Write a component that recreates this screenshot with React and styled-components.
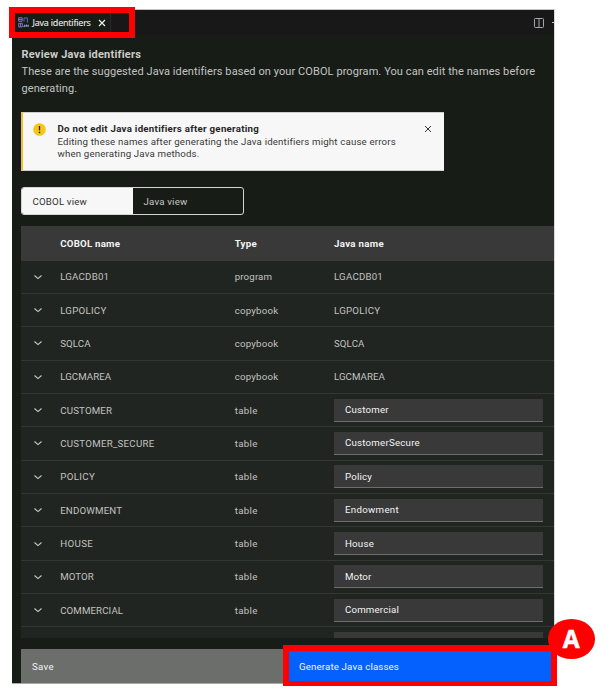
import React from 'react';
import styled, { createGlobalStyle } from 'styled-components';

const Global = createGlobalStyle`
  * { box-sizing: border-box; }
  body { margin: 0; background: #fff; font-family: Roboto, "Liberation Sans", sans-serif; }
  button, input { font: inherit; color: inherit; border: 0; padding: 0; margin: 0; background: none; text-align: left; }
`;

const Stage = styled.div`
  position: relative;
  width: 614px;
  height: 694px;
  padding: 9px 0 0 12px;
  overflow: hidden;
`;

const Panel = styled.main`
  display: flex;
  flex-direction: column;
  width: 543px;
  height: 675px;
  background: #181c17;
  border-top: 1px solid #c4c4c4;
  border-right: 1px solid #d8d8d8;
  border-bottom: 1px solid #a9a9a9;
  overflow: hidden;
`;

const TabBar = styled.header`
  display: flex;
  justify-content: space-between;
  flex: none;
  height: 25px;
  background: #181818;
`;

const Tab = styled.div`
  display: flex;
  align-items: center;
  width: 99px;
  padding-left: 5.5px;
  background: #181c17;
  border-right: 1px solid #2a2a2a;
  color: #f0f0f0;
  font: 9px/12px "Open Sans", sans-serif;
  letter-spacing: -0.2px;
  white-space: nowrap;
`;

const TabLabel = styled.span`
  margin: 0 6px 0 4px;
  width: 59px;
  -webkit-text-stroke: 0.1px currentColor;
`;

const TabActions = styled.div`
  display: flex;
  align-items: center;
  gap: 8px;
`;

const Dash = styled.span`
  width: 2px;
  height: 1px;
  background: #c5c5c5;
`;

const Content = styled.section`
  display: flex;
  flex-direction: column;
  flex: none;
  height: 603px;
  padding: 11px 0 0 9px;
`;

const Title = styled.h1`
  margin: 0;
  padding-left: 0.5px;
  font-size: 11px;
  line-height: 17px;
  font-weight: 700;
  letter-spacing: 0.222px;
  color: #cbccca;
`;

const Intro = styled.p`
  margin: 0;
  padding-left: 0.5px;
  font-size: 11px;
  line-height: 17px;
  letter-spacing: 0.082px;
  color: #c3c4c2;
  white-space: nowrap;
`;

const Notice = styled.aside`
  display: flex;
  flex: none;
  width: 423px;
  height: 59px;
  margin-top: 15px;
  padding: 10px 12px 0 10px;
  background: #f7f7f7;
  border-left: 2px solid #f1c21b;
  border-top: 1px solid #cfcfcf;
  border-bottom: 1px solid #cfcfcf;
  color: #393939;
  font-size: 9.7px;
  line-height: 12.7px;
  letter-spacing: 0.167px;
  white-space: nowrap;
`;

const NoticeText = styled.div`
  flex: 1;
  margin-left: 11.5px;
`;

const NoticeTitle = styled.div`
  font-weight: 700;
  letter-spacing: 0.274px;
  color: #262626;
`;

const NoticeClose = styled.div`
  display: flex;
  align-items: center;
  height: 12px;
  color: #333;
`;

const Switcher = styled.div`
  display: flex;
  flex: none;
  width: 223px;
  height: 28px;
  margin-top: 16px;
  border: 1px solid #d5d5d5;
  border-radius: 3px;
  overflow: hidden;
`;

const SwitchButton = styled.button`
  width: ${(p) => (p.$selected ? '111px' : '110px')};
  padding-left: 10.5px;
  background: ${(p) => (p.$selected ? '#f7f7f7' : 'transparent')};
  color: ${(p) => (p.$selected ? '#303030' : '#c6c7c5')};
  font-size: 9.7px;
  letter-spacing: 0.18px;
`;

const Table = styled.div`
  flex: none;
  height: 412px;
  margin-top: 11px;
  overflow: hidden;
  background: #212521;
`;

const Row = styled.div`
  display: grid;
  grid-template-columns: 39.2px 174.5px 99.3px 209.5px;
  align-items: center;
  height: 33.36px;
  border-bottom: 1px solid #333632;
  color: #c1c3c0;
  font-size: 9.7px;
`;

const HeadRow = styled(Row)`
  height: 34.5px;
  padding-top: 1px;
  background: #393939;
  border-color: #393939;
  color: #f4f4f4;
  font-weight: 700;
`;

const Cell = styled.span`
  letter-spacing: ${(p) => p.$track}px;
  white-space: nowrap;
`;

const Expander = styled.button`
  display: flex;
  padding-left: 12px;
`;

const NameInput = styled.input`
  width: 209.5px;
  height: 23px;
  padding: 0 11px;
  background: #393939;
  border-bottom: 1px solid #6c6d6c;
  color: #f4f4f4;
  letter-spacing: ${(p) => p.$track}px;
  outline: 0;
`;

const Footer = styled.footer`
  display: flex;
  flex: none;
  height: 34px;
  margin: 11px 0 0 9px;
`;

const FooterButton = styled.button`
  width: ${(p) => (p.$primary ? '266px' : '267px')};
  padding-left: 11px;
  background: ${(p) => (p.$primary ? '#0561fe' : '#6b6e6a')};
  color: #f4f4f4;
  font-size: 9.7px;
  letter-spacing: ${(p) => (p.$primary ? '0.145px' : '0.32px')};
`;

const Highlight = styled.div`
  position: absolute;
  border: 6px solid #fe0000;
`;

const TabHighlight = styled(Highlight)`
  left: 9px;
  top: 7px;
  width: 126px;
  height: 31px;
`;

const ButtonHighlight = styled(Highlight)`
  left: 283px;
  top: 645px;
  width: 274px;
  height: 41px;
  border-bottom-width: 5px;
`;

const Callout = styled.div`
  position: absolute;
  left: 548px;
  top: 619px;
  width: 46.5px;
  height: 39.5px;
  border-radius: 50%;
  background: #fe0000;
  color: #fff;
  font: 700 24.5px/40px "Open Sans", sans-serif;
  -webkit-text-stroke: 0.5px #fff;
  text-align: center;
`;

const CloseIcon = ({ size, weight }) => (
  <svg width={size} height={size} viewBox="0 0 8 8" stroke="currentColor" strokeWidth={weight} fill="none">
    <path d="M1 1l6 6M7 1L1 7" />
  </svg>
);

const AppIcon = () => (
  <svg width="11" height="11" viewBox="0 0 11 11" fill="none" strokeWidth="1">
    <path d="M.7.7h3.4v3.6H.7zM.7 2.5h3.4" stroke="#8a6bd0" />
    <path d="M6 4.6V1h3.4v4.6" stroke="#4c6ec0" />
    <path d="M.7 6.3h3.6v3.6H.7zM2.5 6.3v3.6" stroke="#7d6bd6" />
    <path d="M5.4 9.6h1.2V7.7M8 9.8V8h1v1.8M10.3 7.7v2.1" stroke="#b8c0ea" strokeWidth=".8" />
  </svg>
);

const SplitIcon = () => (
  <svg width="10" height="10" viewBox="0 0 10 10" fill="none" stroke="#a5a5aa">
    <rect x=".5" y=".5" width="9" height="9" rx=".8" />
    <path d="M5 .5v9" />
  </svg>
);

const WarningIcon = () => (
  <svg width="13" height="13" viewBox="0 0 13 13">
    <circle cx="6.5" cy="6.5" r="6.3" fill="#f5c518" />
    <path d="M6.5 3v4.4" stroke="#262626" strokeWidth="1.3" />
    <circle cx="6.5" cy="9.4" r=".8" fill="#262626" />
  </svg>
);

const Chevron = () => (
  <svg width="10" height="10" viewBox="0 0 10 10" fill="none" stroke="#c9cac8" strokeWidth="1.1">
    <path d="M1.5 3.5L5 6.6l3.5-3.1" />
  </svg>
);

// Each text is paired with its letter spacing in pixels.
const TYPES = { program: 0.15, copybook: 0.217, table: 0.326 };

const ROWS = [
  { name: ['LGACDB01', 0.205], type: 'program' },
  { name: ['LGPOLICY', 0.255], type: 'copybook' },
  { name: ['SQLCA', 0.11], type: 'copybook' },
  { name: ['LGCMAREA', 0.066], type: 'copybook' },
  { name: ['CUSTOMER', 0.177], type: 'table', java: ['Customer', 0.192] },
  { name: ['CUSTOMER_SECURE', 0.268], type: 'table', java: ['CustomerSecure', 0.229] },
  { name: ['POLICY', 0.375], type: 'table', java: ['Policy', 0.177] },
  { name: ['ENDOWMENT', 0.161], type: 'table', java: ['Endowment', 0.303] },
  { name: ['HOUSE', 0.377], type: 'table', java: ['House', 0.217] },
  { name: ['MOTOR', 0.045], type: 'table', java: ['Motor', 0.087] },
  { name: ['COMMERCIAL', 0.108], type: 'table', java: ['Commercial', 0.18] },
];

const IdentifierRow = ({ name, type, java }) => (
  <Row>
    <Expander aria-label="Expand"><Chevron /></Expander>
    <Cell $track={name[1]}>{name[0]}</Cell>
    <Cell $track={TYPES[type]}>{type}</Cell>
    {java ? <NameInput defaultValue={java[0]} $track={java[1]} /> : <Cell $track={name[1]}>{name[0]}</Cell>}
  </Row>
);

export default function App() {
  return (
    <Stage>
      <Global />
      <Panel>
        <TabBar>
          <Tab>
            <AppIcon />
            <TabLabel>Java identifiers</TabLabel>
            <CloseIcon size={8} weight={1.2} />
          </Tab>
          <TabActions>
            <SplitIcon />
            <Dash />
          </TabActions>
        </TabBar>
        <Content>
          <Title>Review Java identifiers</Title>
          <Intro>
            These are the suggested Java identifiers based on your COBOL program. You can edit the names before
            <br />
            generating.
          </Intro>
          <Notice>
            <WarningIcon />
            <NoticeText>
              <NoticeTitle>Do not edit Java identifiers after generating</NoticeTitle>
              Editing these names after generating the Java identifiers might cause errors
              <br />
              when generating Java methods.
            </NoticeText>
            <NoticeClose><CloseIcon size={8} weight={1} /></NoticeClose>
          </Notice>
          <Switcher>
            <SwitchButton $selected>COBOL view</SwitchButton>
            <SwitchButton>Java view</SwitchButton>
          </Switcher>
          <Table>
            <HeadRow>
              <span />
              <Cell $track={0.223}>COBOL name</Cell>
              <Cell $track={0.278}>Type</Cell>
              <Cell $track={0.312}>Java name</Cell>
            </HeadRow>
            {ROWS.map((row) => <IdentifierRow key={row.name[0]} {...row} />)}
            <Row>
              <span />
              <span />
              <span />
              <NameInput $track={0} />
            </Row>
          </Table>
        </Content>
        <Footer>
          <FooterButton>Save</FooterButton>
          <FooterButton $primary>Generate Java classes</FooterButton>
        </Footer>
      </Panel>
      <TabHighlight />
      <ButtonHighlight />
      <Callout>A</Callout>
    </Stage>
  );
}
